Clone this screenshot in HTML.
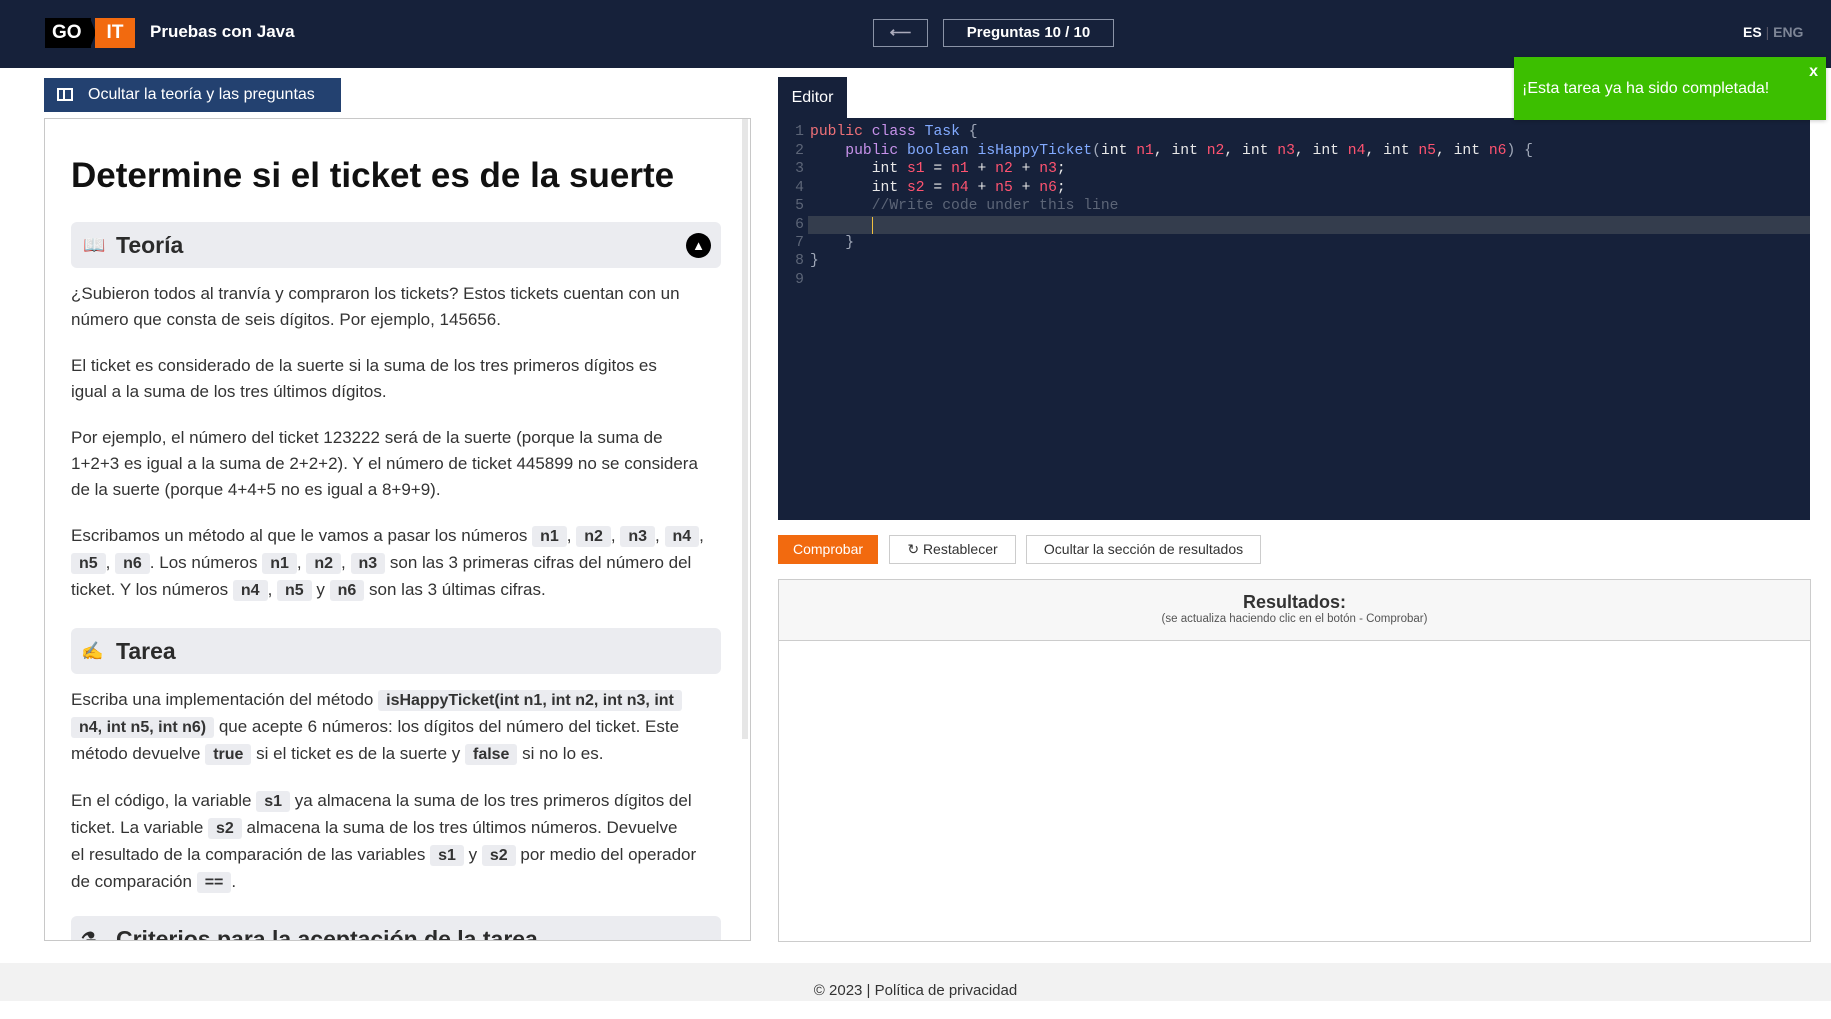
<!DOCTYPE html>
<html><head><meta charset="utf-8"><style>
*{box-sizing:border-box;margin:0;padding:0}
body{width:1831px;height:1001px;overflow:hidden;background:#fff;font-family:"Liberation Sans",sans-serif;color:#2b2b2b;position:relative}
.abs{position:absolute}
.hdr{left:0;top:0;width:1831px;height:68px;background:#16213a}
.go{left:45px;top:18px;width:46px;height:30px;background:#000;color:#fff;font-weight:bold;font-size:19px;line-height:30px;padding-left:7px}
.it{left:95px;top:18px;width:40px;height:30px;background:#f26a0f;color:#fff;font-weight:bold;font-size:19px;line-height:30px;text-align:center}
.nbtn{border:1px solid #8a93a6;color:#fff;text-align:center;font-weight:bold;font-size:15px;line-height:26px}
.panel{left:44px;top:118px;width:707px;height:823px;border:1px solid #c8c8c8;overflow:hidden}
.bar{position:absolute;left:26px;width:650px;height:46px;background:#ebecf0;border-radius:6px;font-weight:bold;font-size:23px;line-height:46px;padding-left:45px}
.txt{position:absolute;left:26px;width:660px;font-size:17px;line-height:26px;color:#333;white-space:nowrap}
.txt p{margin-bottom:20px}
code{font-family:"Liberation Sans",sans-serif;font-weight:bold;background:#ebecf0;padding:2px 8px;border-radius:3px;font-size:16px}
.ed{left:778px;top:118px;width:1032px;height:402px;background:#16213a;font-family:"Liberation Mono",monospace;font-size:14.7px}
.ln{position:absolute;left:0;width:1032px;height:18.4px;line-height:18.4px;color:#e8e8e8;white-space:pre}
.ln b{font-weight:normal;color:#5c6577;display:inline-block;width:26px;text-align:right;margin-right:6px}
.k{color:#f07178}.c{color:#c792ea}.t{color:#82aaff}.v{color:#ff5370}.p{color:#a0a8b8}.cm{color:#5c6577}
.btn{top:535px;height:29px;font-size:14px;line-height:27px;text-align:center;border:1px solid #ccc;color:#333}
</style></head><body>
<div class="abs hdr"></div>
<div class="abs go">GO</div>
<div class="abs" style="left:90px;top:18px;width:0;height:0;border-top:15px solid transparent;border-bottom:15px solid transparent;border-left:6px solid #000"></div>
<div class="abs it">IT</div>
<div class="abs" style="left:150px;top:22px;color:#fff;font-size:17px;font-weight:bold">Pruebas con Java</div>
<div class="abs nbtn" style="left:873px;top:19px;width:55px;height:28px;color:#aab">⟵</div>
<div class="abs nbtn" style="left:943px;top:19px;width:171px;height:28px">Preguntas 10 / 10</div>
<div class="abs" style="left:1743px;top:24px;font-size:14px;font-weight:bold;color:#fff">ES <span style="color:#556;font-weight:normal">|</span> <span style="color:#7d8596">ENG</span></div>

<div class="abs" style="left:44px;top:78px;width:297px;height:34px;background:#234170;color:#fff;font-size:16px;line-height:34px;padding-left:44px">
<span style="position:absolute;left:13px;top:10px;width:16px;height:13px;border:2px solid #fff"></span><span style="position:absolute;left:19px;top:10px;width:2px;height:13px;background:#fff"></span>Ocultar la teoría y las preguntas</div>

<div class="abs panel">
<div style="position:absolute;right:2px;top:0;width:6px;height:620px;background:#e6e6e6"></div>
<div style="position:absolute;left:26px;top:37px;font-size:35px;font-weight:bold;color:#111">Determine si el ticket es de la suerte</div>
<div class="bar" style="top:103px">Teoría<span style="position:absolute;left:12px;top:0;font-size:18px">📖</span><span style="position:absolute;right:10px;top:11px;width:25px;height:25px;border-radius:50%;background:#000;color:#fff;font-size:13px;line-height:25px;text-align:center">▲</span></div>
<div class="txt" style="top:162px">
<p>¿Subieron todos al tranvía y compraron los tickets? Estos tickets cuentan con un<br>número que consta de seis dígitos. Por ejemplo, 145656.</p>
<p>El ticket es considerado de la suerte si la suma de los tres primeros dígitos es<br>igual a la suma de los tres últimos dígitos.</p>
<p>Por ejemplo, el número del ticket 123222 será de la suerte (porque la suma de<br>1+2+3 es igual a la suma de 2+2+2). Y el número de ticket 445899 no se considera<br>de la suerte (porque 4+4+5 no es igual a 8+9+9).</p>
<p>Escribamos un método al que le vamos a pasar los números <code>n1</code>, <code>n2</code>, <code>n3</code>, <code>n4</code>,<br><code>n5</code>, <code>n6</code>. Los números <code>n1</code>, <code>n2</code>, <code>n3</code> son las 3 primeras cifras del número del<br>ticket. Y los números <code>n4</code>, <code>n5</code> y <code>n6</code> son las 3 últimas cifras.</p>
</div>
<div class="bar" style="top:509px">Tarea<span style="position:absolute;left:10px;top:0;font-size:18px">✍</span></div>
<div class="txt" style="top:568px">
<p>Escriba una implementación del método <code>isHappyTicket(int n1, int n2, int n3, int</code><br><code>n4, int n5, int n6)</code> que acepte 6 números: los dígitos del número del ticket. Este<br>método devuelve <code>true</code> si el ticket es de la suerte y <code>false</code> si no lo es.</p>
<p>En el código, la variable <code>s1</code> ya almacena la suma de los tres primeros dígitos del<br>ticket. La variable <code>s2</code> almacena la suma de los tres últimos números. Devuelve<br>el resultado de la comparación de las variables <code>s1</code> y <code>s2</code> por medio del operador<br>de comparación <code>==</code>.</p>
</div>
<div class="bar" style="top:797px">Criterios para la aceptación de la tarea<span style="position:absolute;left:10px;top:0;font-size:18px">⚗</span></div>
</div>

<div class="abs" style="left:778px;top:77px;width:69px;height:41px;background:#16213a;color:#fff;font-size:16px;line-height:41px;text-align:center">Editor</div>
<div class="abs ed">
<div style="position:absolute;left:30px;top:98px;width:1002px;height:18.4px;background:#343d4d"></div>
<div style="position:absolute;left:94px;top:99px;width:1px;height:17px;background:#f0c040"></div>
<div class="ln" style="top:5px"><b>1</b><span class="k">public</span> <span class="c">class</span> <span class="t">Task</span> <span class="p">{</span></div>
<div class="ln" style="top:24px"><b>2</b>    <span class="c">public</span> <span class="t">boolean</span> <span class="t">isHappyTicket</span><span class="p">(</span>int <span class="v">n1</span>, int <span class="v">n2</span>, int <span class="v">n3</span>, int <span class="v">n4</span>, int <span class="v">n5</span>, int <span class="v">n6</span><span class="p">) {</span></div>
<div class="ln" style="top:42px"><b>3</b>       int <span class="v">s1</span> = <span class="v">n1</span> + <span class="v">n2</span> + <span class="v">n3</span>;</div>
<div class="ln" style="top:61px"><b>4</b>       int <span class="v">s2</span> = <span class="v">n4</span> + <span class="v">n5</span> + <span class="v">n6</span>;</div>
<div class="ln" style="top:79px"><b>5</b>       <span class="cm">//Write code under this line</span></div>
<div class="ln" style="top:98px"><b>6</b></div>
<div class="ln" style="top:116px"><b>7</b>    <span class="p">}</span></div>
<div class="ln" style="top:134px"><b>8</b><span class="p">}</span></div>
<div class="ln" style="top:153px"><b>9</b></div>
</div>

<div class="abs" style="left:1514px;top:57px;width:312px;height:63px;background:#3cbf00;color:#fff;font-size:16px;line-height:63px;padding-left:8px;box-shadow:0 1px 4px rgba(0,0,0,.2)">¡Esta tarea ya ha sido completada!<span style="position:absolute;right:8px;top:-17px;font-weight:bold;font-size:16px">x</span></div>

<div class="abs btn" style="left:778px;width:100px;background:#f26a0f;border-color:#f26a0f;color:#fff">Comprobar</div>
<div class="abs btn" style="left:889px;width:127px">↻ Restablecer</div>
<div class="abs btn" style="left:1026px;width:235px">Ocultar la sección de resultados</div>

<div class="abs" style="left:778px;top:579px;width:1033px;height:363px;border:1px solid #ccc">
<div style="height:61px;background:#f7f7f7;border-bottom:1px solid #ccc;text-align:center">
<div style="padding-top:12px;font-size:18px;font-weight:bold;color:#333">Resultados:</div>
<div style="font-size:11.5px;color:#555">(se actualiza haciendo clic en el botón - Comprobar)</div></div></div>

<div class="abs" style="left:0;top:963px;width:1831px;height:38px;background:#f2f2f2;text-align:center;font-size:15px;color:#333;line-height:56px">© 2023 | Política de privacidad</div>
</body></html>
